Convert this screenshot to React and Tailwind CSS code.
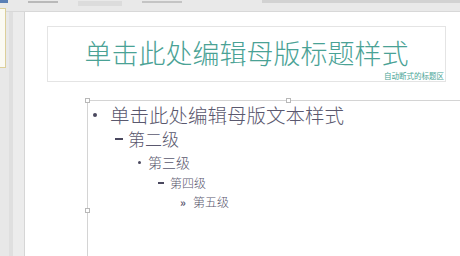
const CJK = "font-['Noto_Sans_CJK_SC','Noto_Sans',sans-serif]"

const Handle = ({ className }) => (
  <span className={`absolute w-[5px] h-[5px] border border-[#b8b8b8] bg-white ${className}`} />
)

const Dot = ({ size }) => <span className={`inline-block rounded-full bg-[#4a485e] ${size}`} />
const Dash = ({ size }) => <span className={`inline-block bg-[#4a485e] ${size}`} />

const levels = [
  { mark: <Dot size="w-[4px] h-[4px]" />, text: '单击此处编辑母版文本样式', pad: 'pl-[5px]', size: 'text-[19.5px] leading-[24px]', gap: 'w-[17px]' },
  { mark: <Dash size="w-[8px] h-[2px]" />, text: '第二级', pad: 'pl-[27px]', size: 'text-[17px] leading-[24px]', gap: 'w-[13px]' },
  { mark: <Dot size="w-[3px] h-[3px]" />, text: '第三级', pad: 'pl-[50px]', size: 'text-[14px] leading-[22px]', gap: 'w-[10px]' },
  { mark: <Dash size="w-[6px] h-[2px]" />, text: '第四级', pad: 'pl-[70px]', size: 'text-[12px] leading-[20px]', gap: 'w-[12px]' },
  { mark: <span className="text-[11px] font-bold">»</span>, text: '第五级', pad: 'pl-[92px]', size: 'text-[12px] leading-[18px]', gap: 'w-[13px]' },
]

export default function App() {
  return (
    <div className={`w-[460px] h-[256px] overflow-hidden bg-[#e6e6e6] flex flex-col ${CJK}`}>
      {/* toolbar remnant */}
      <div className="h-[12px] flex items-start gap-[20px] bg-[#e9e9e9] border-b border-[#d8d8d8]">
        <div className="w-[8px] h-[3px] bg-[#5a7fb5]" />
        <div className="w-[30px] h-[2px] mt-[1px] bg-[#b9b9b9]" />
        <div className="w-[44px] h-[5px] bg-[#dcdcdc] mt-[1px]" />
        <div className="w-[40px] h-[2px] mt-[1px] bg-[#c4c4c4]" />
        <div className="flex-1 h-[3px] bg-[#d2d2d2] ml-[60px]" />
      </div>

      <div className="flex-1 flex min-h-0">
        {/* slide panel */}
        <div className="w-[25px] flex bg-[#e8e8e8]">
          <div className="w-[6px] h-[60px] mt-[-4px] bg-[#fbfaf3] border border-l-0 border-[#dccf9a]" />
          <div className="w-[4px] bg-[#dfdfdf] ml-[3px]" />
          <div className="flex-1 bg-[#ececec] border-r border-[#d6d6d6]" />
        </div>

        {/* slide */}
        <div className="flex-1 bg-white pt-[14px] flex flex-col">
          <div className="relative ml-[22px] w-[399px] h-[56px] border border-[#e4e4e4] flex items-center justify-center">
            <span className="text-[27px] leading-none font-light text-[#4aa295] mt-[-4px]">
              单击此处编辑母版标题样式
            </span>
            <span className="absolute right-[1px] bottom-[2px] text-[7.5px] leading-none text-[#4aa596]">
              自动断式的标题区
            </span>
          </div>

          <div className="relative mt-[18px] ml-[62px] flex-1 border-t border-l border-[#d4d4d4] pt-[2px]">
            <Handle className="left-[-3px] top-[-3px]" />
            <Handle className="left-[198px] top-[-3px]" />
            <Handle className="left-[-3px] top-[107px]" />
            {levels.map((l, i) => (
              <div key={i} className={`flex items-center ${l.pad} ${l.size} font-light text-[#5a586e]`}>
                <span className={`${l.gap} flex items-center`}>{l.mark}</span>
                <span>{l.text}</span>
              </div>
            ))}
          </div>
        </div>
      </div>
    </div>
  )
}
